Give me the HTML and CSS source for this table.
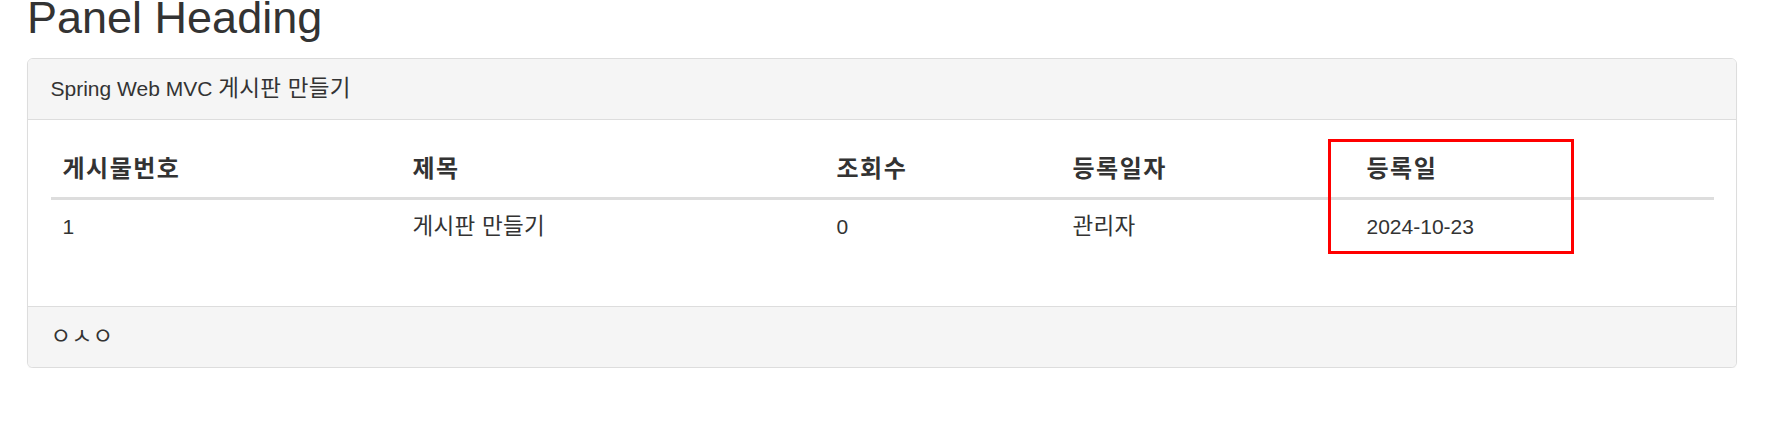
FILE: index.html
```html
<!DOCTYPE html>
<html lang="ko">
<head>
<meta charset="utf-8">
<title>Panel Heading</title>
<link rel="stylesheet" href="styles.css">
</head>
<body>
<div class="page">
  <h1 class="title">Panel Heading</h1>
  <div class="panel">
    <div class="panel-heading">Spring Web MVC <span class="ko">게시판 만들기</span></div>
    <div class="panel-body">
      <table class="table">
        <colgroup>
          <col class="c-no">
          <col class="c-title">
          <col class="c-views">
          <col class="c-writer">
          <col class="c-date">
        </colgroup>
        <thead>
          <tr>
            <th><span class="ko-b">게시물번호</span></th>
            <th><span class="ko-b">제목</span></th>
            <th><span class="ko-b">조회수</span></th>
            <th><span class="ko-b">등록일자</span></th>
            <th><span class="ko-b">등록일</span></th>
          </tr>
        </thead>
        <tbody>
          <tr>
            <td>1</td>
            <td><span class="ko">게시판 만들기</span></td>
            <td>0</td>
            <td><span class="ko">관리자</span></td>
            <td>2024-10-23</td>
          </tr>
        </tbody>
      </table>
    </div>
    <div class="panel-footer"><span class="ko">ㅇㅅㅇ</span></div>
  </div>
</div>
<div class="highlight"></div>
</body>
</html>
```

FILE: styles.css
```css
html, body {
  margin: 0;
  padding: 0;
  background: #fff;
}

body {
  font-family: "Liberation Sans", Arial, "Noto Sans CJK KR", sans-serif;
  font-size: 21px;
  line-height: 30px;
  color: #333;
}

.page {
  padding: 0 51px 0 27px;
}

.title {
  margin: 0 0 23px 0;
  font-size: 45px;
  font-weight: 400;
  line-height: 35px;
  color: #333;
}

.ko {
  font-family: "Noto Sans CJK KR", "Liberation Sans", sans-serif;
  font-size: 22.5px;
  line-height: 20px;
  letter-spacing: 0.3px;
}

.ko-b {
  font-family: "Noto Sans CJK KR", "Liberation Sans", sans-serif;
  font-size: 24px;
  font-weight: 700;
  line-height: 20px;
  letter-spacing: 1.5px;
}

.panel {
  border: 1px solid #ddd;
  border-radius: 6px;
  background: #fff;
  box-shadow: 0 1px 1px rgba(0, 0, 0, 0.05);
}

.panel-heading {
  background: #f5f5f5;
  border-bottom: 1px solid #ddd;
  border-radius: 5px 5px 0 0;
  padding: 15px 22.5px;
  height: 30px;
}

.panel-body {
  padding: 22.5px 22.5px 22px;
}

.table {
  width: 100%;
  border-collapse: collapse;
  border-spacing: 0;
  table-layout: fixed;
  margin-bottom: 30px;
}

.c-no { width: 350px; }
.c-title { width: 424px; }
.c-views { width: 236px; }
.c-writer { width: 294px; }
.c-date { width: 359px; }

.table th,
.table td {
  padding: 12px;
  text-align: left;
  vertical-align: top;
  line-height: 30px;
  height: 30px;
}

.table th {
  font-weight: 700;
  border-bottom: 3px solid #ddd;
}

.table td {
  border-top: 1px solid #ddd;
}

.panel-footer {
  background: #f5f5f5;
  border-top: 1px solid #ddd;
  border-radius: 0 0 5px 5px;
  padding: 15px 22.5px;
  height: 30px;
}

.highlight {
  position: absolute;
  left: 1328px;
  top: 139px;
  width: 246px;
  height: 115px;
  box-sizing: border-box;
  border: 3px solid #ff0000;
}
```
